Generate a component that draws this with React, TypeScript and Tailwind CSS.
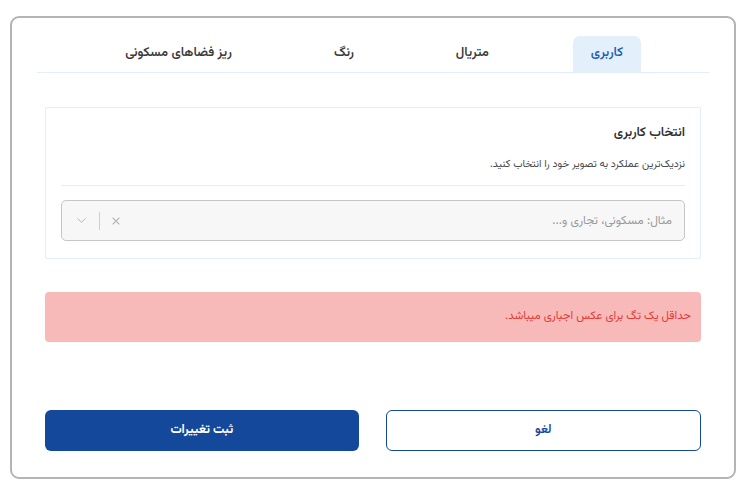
import { ChevronDown, X } from 'lucide-react';

const TABS = ['کاربری', 'متریال', 'رنگ', 'ریز فضاهای مسکونی'];

export default function App() {
  return (
    <div className="min-h-[495px] bg-white px-[10px] pt-[16px] pb-[16px]" style={{ fontFamily: 'Vazirmatn, "DejaVu Sans", sans-serif' }}>
      <div dir="rtl" className="h-[463px] rounded-[9px] border-2 border-[#b4b4b4] bg-white">
        {/* Tabs */}
        <div className="mx-[25px] mt-[18px] flex h-[37px] items-end gap-[66px] border-b border-[#e4eef8] pr-[68px]">
          {TABS.map((t, i) => (
            <div
              key={t}
              className={
                i === 0
                  ? 'flex h-[36px] items-center rounded-t-[7px] bg-[#e3f0fc] px-[18px] text-[13px] font-semibold text-[#1f5fb5]'
                  : 'flex h-[36px] items-center px-[18px] text-[13px] font-semibold text-[#3a3a3a]'
              }
            >
              {t}
            </div>
          ))}
        </div>

        {/* Usage card */}
        <div className="mx-[33px] mt-[34px] rounded-[2px] border border-[#e3eef8] px-[15px] pb-[17px] pt-[14px]">
          <div className="text-[13px] font-semibold leading-[22px] text-[#2f2f2f]">انتخاب کاربری</div>
          <div className="mt-[13px] text-[10.5px] leading-[16px] text-[#4a4a4a]">نزدیک‌ترین عملکرد به تصویر خود را انتخاب کنید.</div>
          <div className="mt-[12px] border-t border-[#e6eef6]" />
          <div className="mt-[14px] flex h-[41px] items-center rounded-[5px] border border-[#c6c6c6] bg-[#f7f7f7] pl-[12px] pr-[12px]">
            <span className="flex-1 text-[12px] text-[#9a9a9a]">مثال: مسکونی، تجاری و...</span>
            <X size={12} strokeWidth={2.2} className="text-[#b8b8b8]" />
            <span className="mx-[10px] h-[18px] w-px bg-[#cfcfcf]" />
            <ChevronDown size={15} strokeWidth={1.6} className="text-[#b8b8b8]" />
          </div>
        </div>

        {/* Error */}
        <div className="mx-[33px] mt-[33px] flex h-[50px] items-center rounded-[4px] bg-[#f8b9b9] px-[10px] text-[11.5px] text-[#e53935]">
          حداقل یک تگ برای عکس اجباری میباشد.
        </div>

        {/* Actions */}
        <div className="mx-[33px] mt-[68px] flex gap-[27px]">
          <button className="flex h-[41px] flex-1 items-center justify-center rounded-[6px] border border-[#14489a] bg-white text-[12.5px] font-semibold text-[#14489a]">
            لغو
          </button>
          <button className="flex h-[41px] flex-1 items-center justify-center rounded-[6px] bg-[#14489a] text-[12.5px] font-bold text-white">
            ثبت تغییرات
          </button>
        </div>
      </div>
    </div>
  );
}
